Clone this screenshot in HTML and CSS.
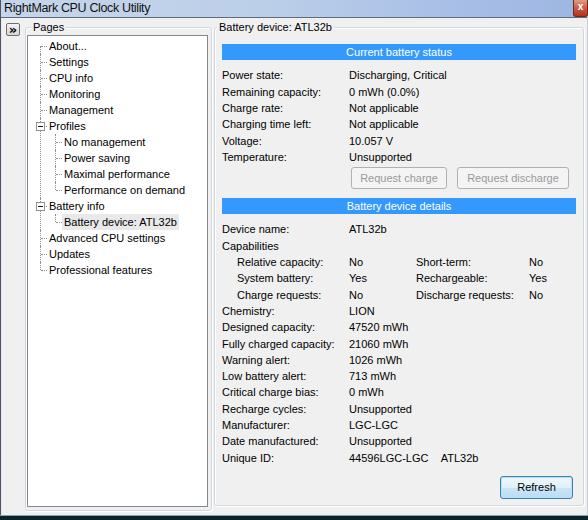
FILE: index.html
```html
<!DOCTYPE html>
<html>
<head>
<meta charset="utf-8">
<link rel="stylesheet" href="styles.css">
</head>
<body>
<div class="window">
  <div class="titlebar">
    <span class="title">RightMark CPU Clock Utility</span>
    <span class="close">x</span>
  </div>
  <div class="main">
    <div class="side">
      <button class="toggle">&raquo;</button>
      <div class="group pages">
        <div class="legend">Pages</div>
        <div class="tree">
          <ul class="root">
            <li><span class="lbl">About...</span></li>
            <li><span class="lbl">Settings</span></li>
            <li><span class="lbl">CPU info</span></li>
            <li><span class="lbl">Monitoring</span></li>
            <li><span class="lbl">Management</span></li>
            <li class="parent"><span class="box"></span><span class="lbl">Profiles</span>
              <ul>
                <li><span class="lbl">No management</span></li>
                <li><span class="lbl">Power saving</span></li>
                <li><span class="lbl">Maximal performance</span></li>
                <li><span class="lbl">Performance on demand</span></li>
              </ul>
            </li>
            <li class="parent"><span class="box"></span><span class="lbl">Battery info</span>
              <ul>
                <li><span class="lbl sel">Battery device: ATL32b</span></li>
              </ul>
            </li>
            <li><span class="lbl">Advanced CPU settings</span></li>
            <li><span class="lbl">Updates</span></li>
            <li><span class="lbl">Professional features</span></li>
          </ul>
        </div>
      </div>
    </div>
    <div class="group detail">
      <div class="legend">Battery device: ATL32b</div>
      <div class="bar first">Current battery status</div>
      <div class="rows status">
        <span>Power state:</span><span>Discharging, Critical</span>
        <span>Remaining capacity:</span><span>0 mWh (0.0%)</span>
        <span>Charge rate:</span><span>Not applicable</span>
        <span>Charging time left:</span><span>Not applicable</span>
        <span>Voltage:</span><span>10.057 V</span>
        <span>Temperature:</span><span>Unsupported</span>
      </div>
      <div class="actions">
        <button class="btn disabled w1" disabled>Request charge</button>
        <button class="btn disabled w2" disabled>Request discharge</button>
      </div>
      <div class="bar second">Battery device details</div>
      <div class="rows details">
        <span>Device name:</span><span>ATL32b</span>
        <span class="full">Capabilities</span>
        <div class="caps">
          <span>Relative capacity:</span><span>No</span><span>Short-term:</span><span>No</span>
        </div>
        <div class="caps">
          <span>System battery:</span><span>Yes</span><span>Rechargeable:</span><span>Yes</span>
        </div>
        <div class="caps">
          <span>Charge requests:</span><span>No</span><span>Discharge requests:</span><span>No</span>
        </div>
        <span>Chemistry:</span><span>LION</span>
        <span>Designed capacity:</span><span>47520 mWh</span>
        <span>Fully charged capacity:</span><span>21060 mWh</span>
        <span>Warning alert:</span><span>1026 mWh</span>
        <span>Low battery alert:</span><span>713 mWh</span>
        <span>Critical charge bias:</span><span>0 mWh</span>
        <span>Recharge cycles:</span><span>Unsupported</span>
        <span>Manufacturer:</span><span>LGC-LGC</span>
        <span>Date manufactured:</span><span>Unsupported</span>
        <span>Unique ID:</span><span>44596LGC-LGC&nbsp;&nbsp;&nbsp;&nbsp;ATL32b</span>
      </div>
      <div class="footer">
        <button class="btn default">Refresh</button>
      </div>
    </div>
  </div>
  <div class="taskbar"></div>
</div>
</body>
</html>
```

FILE: styles.css
```css
* { box-sizing: border-box; }
html, body { margin: 0; padding: 0; }
body {
  width: 588px;
  height: 520px;
  overflow: hidden;
  background: #f0f0f0;
  font-family: "Liberation Sans", Arial, sans-serif;
  font-size: 11px;
  color: #000;
}
.window {
  width: 588px;
  height: 520px;
  display: flex;
  flex-direction: column;
  border-left: 1px solid #4e5560;
  border-right: 1px solid #c9cdd2;
  box-shadow: inset 1px 0 0 #e4e8ee;
}
.titlebar {
  height: 18px;
  flex: none;
  display: flex;
  align-items: flex-start;
  justify-content: space-between;
  background: linear-gradient(to right, #c6d5e9 0%, #bccfe9 45%, #a6bde6 80%, #9db6e2 100%);
  border-bottom: 1px solid #5d6d80;
}
.title {
  font-size: 12.5px;
  letter-spacing: -0.35px;
  line-height: 17px;
  padding-left: 3px;
  color: #111;
}
.close {
  width: 15px;
  height: 17px;
  background: linear-gradient(#e29a88, #c9553f 55%, #b2311c);
  border: 1px solid #6e2a20;
  border-top: none;
  border-radius: 0 0 3px 3px;
  color: #fff;
  font-weight: bold;
  font-size: 10px;
  line-height: 14px;
  text-align: center;
  margin-right: -1px;
}
.main {
  flex: 1;
  display: flex;
  align-items: flex-start;
}
.side {
  display: flex;
  align-items: flex-start;
  padding-left: 5px;
}
.toggle {
  width: 14px;
  height: 13px;
  margin-top: 5px;
  padding: 0;
  border: 1px solid #6f6f6f;
  border-radius: 2px;
  background: linear-gradient(#f6f6f6, #e3e3e3 50%, #d6d6d6);
  font-family: "DejaVu Sans", sans-serif;
  font-weight: bold;
  font-size: 13px;
  line-height: 9px;
  color: #000;
}
.group {
  border: 1px solid #d0d8de;
  border-radius: 3px;
  box-shadow: inset 1px 1px 0 #fff, 1px 1px 0 #fff;
}
.legend {
  display: table;
  margin-top: -7px;
  height: 13px;
  line-height: 13px;
  padding: 0 2px;
  background: #f0f0f0;
}
.pages {
  margin-left: 5px;
  margin-top: 9px;
  width: 187px;
  height: 484px;
  padding: 0 3px 3px 1px;
}
.pages .legend { margin-left: 4px; }
.tree {
  margin-top: 1px;
  height: 472px;
  background: #fff;
  border: 1px solid #828790;
  padding-top: 2px;
}
.tree ul {
  list-style: none;
  margin: 0;
  padding: 0;
}
.tree ul.root { margin-left: 12px; }
.tree ul ul { padding-left: 8px; }
.tree li {
  position: relative;
  padding-left: 7px;
}
.tree li::before {
  content: "";
  position: absolute;
  left: 0;
  top: 0;
  bottom: 0;
  border-left: 1px dotted #8f8f8f;
}
.tree ul.root > li:first-child::before { top: 8px; }
.tree li:last-child::before { bottom: auto; height: 8px; }
.tree li::after {
  content: "";
  position: absolute;
  left: 1px;
  top: 8px;
  width: 6px;
  border-top: 1px dotted #8f8f8f;
}
.lbl {
  display: inline-block;
  height: 16px;
  line-height: 16px;
  padding: 0 2px;
  white-space: nowrap;
}
.lbl.sel { background: #e9e9e9; }
.box {
  position: absolute;
  z-index: 1;
  left: -4px;
  top: 4px;
  width: 9px;
  height: 9px;
  background: #fff;
  border: 1px solid #939393;
}
.box::after {
  content: "";
  position: absolute;
  left: 1px;
  top: 3px;
  width: 5px;
  height: 1px;
  background: #1a1a1a;
}
.detail {
  margin-left: 2px;
  margin-top: 9px;
  width: 370px;
  height: 479px;
  padding: 0 7px;
}
.detail .legend { margin-left: -5px; }
.bar {
  height: 16px;
  line-height: 16px;
  background: #3399ff;
  color: #fff;
  text-align: center;
}
.bar.first { margin-top: 10px; }
.bar.second { margin-top: 9px; }
.rows {
  display: grid;
  grid-template-columns: 127px 1fr;
  align-items: center;
  white-space: nowrap;
}
.rows.status {
  margin-top: 7px;
  grid-auto-rows: 16.4px;
}
.rows.details {
  margin-top: 7px;
  grid-auto-rows: 16.3px;
}
.rows .full { grid-column: 1 / -1; }
.caps {
  grid-column: 1 / -1;
  display: grid;
  grid-template-columns: 112px 67px 113px 1fr;
  padding-left: 15px;
}
.actions {
  display: flex;
  justify-content: flex-end;
  gap: 10px;
  margin-top: 2px;
  padding-right: 7px;
}
.btn {
  height: 22px;
  padding: 0;
  font-family: "Liberation Sans", Arial, sans-serif;
  font-size: 11px;
  border-radius: 3px;
}
.btn.disabled {
  background: #f4f4f4;
  border: 1px solid #adb2b5;
  color: #9a9a9a;
}
.w1 { width: 96px; }
.w2 { width: 112px; }
.footer {
  display: flex;
  justify-content: flex-end;
  margin-top: 10px;
  padding-right: 3px;
}
.btn.default {
  width: 73px;
  height: 23px;
  color: #000;
  border: 1px solid #3c7fb1;
  background: linear-gradient(#eef7fc, #e0f0fa 50%, #c9e6f7 51%, #b9dcf2);
  box-shadow: inset 0 0 0 1px #b7e1f7;
}
.taskbar {
  height: 5px;
  flex: none;
  margin-left: -1px;
  margin-right: -1px;
  background: #0e2229;
  border-top: 1px solid #7ea9b0;
}
```
